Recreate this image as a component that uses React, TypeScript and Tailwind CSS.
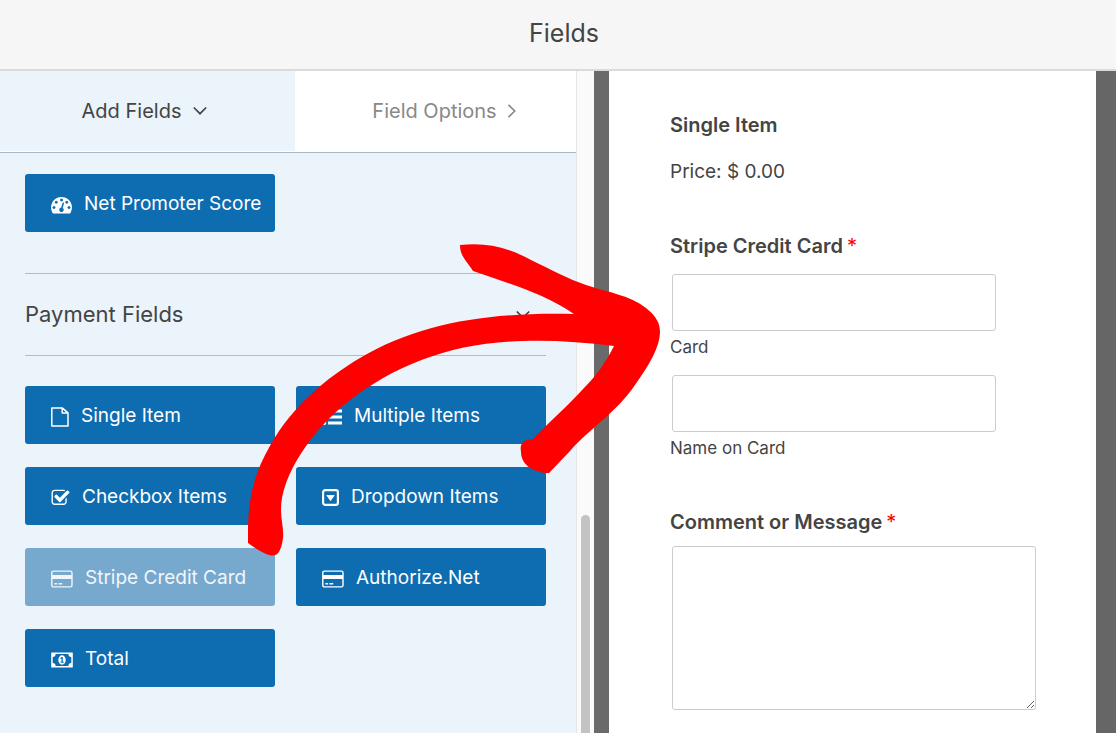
import { useState } from 'react';
import type { ReactNode } from 'react';

type FieldType = {
  label: string;
  icon: ReactNode;
  disabled?: boolean;
};

const GaugeIcon = () => (
  <svg width="21" height="21" viewBox="0 0 1792 1792" fill="currentColor" aria-hidden="true">
    <path d="M384 1152q0-53-37.5-90.5t-90.5-37.5-90.5 37.5-37.5 90.5 37.5 90.5 90.5 37.5 90.5-37.5 37.5-90.5zm192-448q0-53-37.5-90.5t-90.5-37.5-90.5 37.5-37.5 90.5 37.5 90.5 90.5 37.5 90.5-37.5 37.5-90.5zm428 481l101-382q6-26-7.5-48.5t-38.5-29.5-48 6.5-30 39.5l-101 382q-60 5-107 43.5t-63 98.5q-20 77 20 146t117 89 146-20 89-117q16-60-6-117t-72-91zm660-33q0-53-37.5-90.5t-90.5-37.5-90.5 37.5-37.5 90.5 37.5 90.5 90.5 37.5 90.5-37.5 37.5-90.5zm-640-640q0-53-37.5-90.5t-90.5-37.5-90.5 37.5-37.5 90.5 37.5 90.5 90.5 37.5 90.5-37.5 37.5-90.5zm448 192q0-53-37.5-90.5t-90.5-37.5-90.5 37.5-37.5 90.5 37.5 90.5 90.5 37.5 90.5-37.5 37.5-90.5zm320 448q0 261-141 483-19 29-54 29h-1402q-35 0-54-29-141-221-141-483 0-182 71-348t191-286 286-191 348-71 348 71 286 191 191 286 71 348z" />
  </svg>
);

const FileIcon = () => (
  <svg width="18" height="20" viewBox="0 0 18 20" fill="none" stroke="currentColor" strokeWidth="1.5" strokeLinejoin="round" aria-hidden="true">
    <path d="M.8.9h10.400l5.800 5v13.200H.8zM11.200.9v5H17" />
  </svg>
);

const ListIcon = () => (
  <svg width="20" height="20" viewBox="0 0 20 20" fill="currentColor" aria-hidden="true">
    <circle cx="2.2" cy="4" r="2.1" />
    <circle cx="2.2" cy="10" r="2.1" />
    <circle cx="2.2" cy="16" r="2.1" />
    <path d="M6 2.6h14v2.8H6zM6 8.6h14v2.8H6zM6 14.6h14v2.8H6z" />
  </svg>
);

const CheckIcon = () => (
  <svg width="19" height="18" viewBox="64 64 1664 1664" fill="currentColor" aria-hidden="true">
    <path d="M1472 930v318q0 119-84.5 203.5t-203.5 84.5h-832q-119 0-203.5-84.5t-84.5-203.5v-832q0-119 84.5-203.5t203.5-84.5h832q63 0 117 25 15 7 18 23 3 17-9 29l-49 49q-10 10-23 10-3 0-9-2-23-6-45-6h-832q-66 0-113 47t-47 113v832q0 66 47 113t113 47h832q66 0 113-47t47-113v-254q0-13 9-22l64-64q10-10 23-10 6 0 12 3 20 8 20 29zm231-489l-814 814q-24 24-57 24t-57-24l-430-430q-24-24-24-57t24-57l110-110q24-24 57-24t57 24l263 263 647-647q24-24 57-24t57 24l110 110q24 24 24 57t-24 57z" />
  </svg>
);

const CaretSquareIcon = () => (
  <svg width="17" height="17" viewBox="0 0 17 17" fill="currentColor" aria-hidden="true">
    <rect x="1.1" y="1.1" width="14.8" height="14.8" rx="2.2" fill="none" stroke="currentColor" strokeWidth="2.2" />
    <path d="M4.9 5.9h7.2q.8 0 .3.8l-3.4 4.9q-.5.7-1 0L4.6 6.7q-.5-.8.3-.8z" />
  </svg>
);

const CardIcon = () => (
  <svg width="22" height="18" viewBox="0 0 22 18" fill="currentColor" aria-hidden="true">
    <rect x=".8" y="1.1" width="20.2" height="15.8" rx="1.6" fill="none" stroke="currentColor" strokeWidth="1.4" />
    <path d="M1 5h20v4H1zM3.4 13h2.7v1.4H3.4zM7.4 13h3.8v1.4H7.4z" />
  </svg>
);

const MoneyIcon = () => (
  <svg width="22" height="16" viewBox="0 0 22 16" fill="currentColor" aria-hidden="true">
    <path fillRule="evenodd" d="M.8.5h20.4q.6 0 .6.6v13.8q0 .6-.6.6H.8q-.6 0-.6-.6V1.100q0-.6.6-.6zM4.600 2A3 3 0 0 1 1.700 5v6a3 3 0 0 1 2.900 3h12.800a3 3 0 0 1 2.900-3V5a3 3 0 0 1-2.900-3z" />
    <ellipse cx="11" cy="8" rx="3.700" ry="4.700" />
    <path d="M10.500 5h1.300v4.700h1v1H9.500v-1h1V6.500l-.8.500-.5-.8z" fill="#0e6cb0" />
  </svg>
);

const Chevron = ({ right = false }: { right?: boolean }) => (
  <svg width="14" height="14" viewBox="0 0 14 14" fill="none" stroke="currentColor" strokeWidth="1.7" aria-hidden="true">
    <path d={right ? 'M3.500.8 9.700 7l-6.200 6.200' : 'M.8 3.500 7 9.700l6.200-6.200'} />
  </svg>
);

const paymentFields: FieldType[] = [
  { label: 'Single Item', icon: <FileIcon /> },
  { label: 'Multiple Items', icon: <ListIcon /> },
  { label: 'Checkbox Items', icon: <CheckIcon /> },
  { label: 'Dropdown Items', icon: <CaretSquareIcon /> },
  { label: 'Stripe Credit Card', icon: <CardIcon />, disabled: true },
  { label: 'Authorize.Net', icon: <CardIcon /> },
  { label: 'Total', icon: <MoneyIcon /> },
];

function FieldButton({ label, icon, disabled }: FieldType) {
  return (
    <button
      type="button"
      disabled={disabled}
      className="flex h-[58px] items-center gap-3 whitespace-nowrap rounded-[3px] bg-[#0e6cb0] pl-[26px] pt-[3px] text-[19px] text-white disabled:bg-[#77a8ce] disabled:text-[#f1f6fb]"
    >
      {icon}
      {label}
    </button>
  );
}

function Required() {
  return <span className="ml-1 font-normal text-[#f00]">*</span>;
}

function DragArrow() {
  return (
    <svg
      className="pointer-events-none absolute left-[248px] top-[244px]"
      width="413"
      height="313"
      viewBox="248 244 413 313"
      fill="#f00"
      aria-hidden="true"
    >
      <path d="M460 245C486 242 507 247 531 260C552 270 568 279 586 285C610 293 629 295 646 308C656 316 660 323 660 332C660 347 649 365 635 385C615 414 591 427 570 451L549 473C534 473 521 465 521 452C520 445 521 440 533 439C551 420 567 407 584 388C597 375 607 360 614 346C583 342 551 340 523 341C452 343 397 364 349 401C314 428 281 474 281 510C281 521 284 529 283 538C281 554 276 557 269 555Q260 552 248 543C247 501 253 475 271 444C292 407 326 378 360 358C421 322 491 312 574 314C544 293 507 283 473 271C466 260 460 256 460 245Z" />
    </svg>
  );
}

export default function App() {
  const [tab, setTab] = useState('add');
  const [open, setOpen] = useState(true);

  return (
    <div className="relative flex min-h-screen flex-col overflow-hidden bg-white font-[Inter,'Liberation_Sans',sans-serif] text-[#444]">
      <header className="flex h-[71px] items-center justify-center border-b-2 border-[#dadada] bg-[#f6f6f6] pb-1 pl-3">
        <h1 className="text-[25px] leading-8">Fields</h1>
      </header>

      <div className="flex flex-1">
        <aside className="flex w-[594px] shrink-0">
          <div className="flex flex-1 flex-col bg-[#ebf3fb]">
            <div className="flex h-[82px] border-b border-[#a9b8c4] bg-white text-xl">
              <button
                type="button"
                onClick={() => setTab('add')}
                className="flex h-20 w-[295px] items-center justify-center gap-3 bg-[#ebf3fb] pr-1.5"
              >
                Add Fields
                <Chevron right={tab !== 'add'} />
              </button>
              <button
                type="button"
                onClick={() => setTab('options')}
                className="flex h-20 flex-1 items-center justify-center gap-2 pl-5 text-[#888]"
              >
                Field Options
                <Chevron right={tab !== 'options'} />
              </button>
            </div>

            <div className="pl-[25px] pr-[30px] pt-[21px]">
              <div className="grid grid-cols-2 gap-x-[21px]">
                <FieldButton label="Net Promoter Score" icon={<GaugeIcon />} />
              </div>

              <button
                type="button"
                onClick={() => setOpen(!open)}
                className="mt-[41px] flex h-[83px] w-full items-center justify-between border-y border-[#aebdca] pr-4 text-[22px]"
              >
                Payment Fields
                <Chevron right={!open} />
              </button>

              {open && (
                <div className="mt-[30px] grid grid-cols-2 gap-x-[21px] gap-y-[23px]">
                  {paymentFields.map((f) => (
                    <FieldButton key={f.label} {...f} />
                  ))}
                </div>
              )}
            </div>
          </div>

          {/* scrollbar */}
          <div className="flex w-[18px] flex-col items-center justify-end border-l border-[#e6e6e6] bg-[#fafafa]">
            <div className="h-[33%] w-[9px] rounded-t-full bg-[#c3c3c3]" />
          </div>
        </aside>

        <main className="flex flex-1 bg-gradient-to-r from-[#6a6a6a] to-[#666] pl-[15px] pr-5">
          <form className="flex-1 bg-white pl-[61px] pr-[60px] pt-10">
            <h2 className="text-xl font-semibold leading-7">Single Item</h2>
            <p className="mt-[21px] text-[19px] leading-6">Price: $ 0.00</p>

            <fieldset className="mt-12">
              <legend className="text-xl font-semibold leading-7">
                Stripe Credit Card
                <Required />
              </legend>
              <div className="mt-[14px] flex flex-col-reverse">
                <label htmlFor="card" className="mt-1 text-[17px] leading-6">Card</label>
                <input id="card" type="text" className="ml-0.5 h-[57px] w-[324px] max-w-full rounded-[3px] border border-[#ccc] px-3" />
              </div>
              <div className="mt-4 flex flex-col-reverse">
                <label htmlFor="card-name" className="mt-1 text-[17px] leading-6">Name on Card</label>
                <input id="card-name" type="text" className="ml-0.5 h-[57px] w-[324px] max-w-full rounded-[3px] border border-[#ccc] px-3" />
              </div>
            </fieldset>

            <label htmlFor="message" className="mt-12 block text-xl font-semibold leading-7">
              Comment or Message
              <Required />
            </label>
            <div className="mt-[10px] flex pl-0.5">
              <textarea id="message" className="h-[164px] w-full rounded-[3px] border border-[#ccc] p-3" />
            </div>
          </form>
        </main>
      </div>

      <DragArrow />
    </div>
  );
}
